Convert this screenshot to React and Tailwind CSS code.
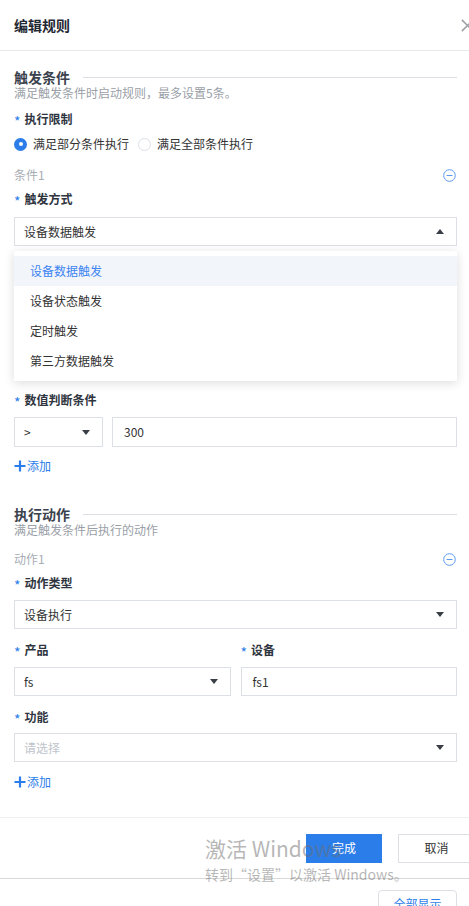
import React from "react";

const font = { fontFamily: '"Noto Sans CJK SC", "Noto Sans", sans-serif' };

// small filled triangle used by the selects
const Caret = ({ up = false }) => (
    <svg width="8" height="5" viewBox="0 0 8 5" className="shrink-0">
        {up ? <path d="M4 0 L8 5 L0 5 Z" fill="#3a3f47" /> : <path d="M0 0 L8 0 L4 5 Z" fill="#3a3f47" />}
    </svg>
);

const Label = ({ children }) => (
    <div className="h-[20px] flex items-center text-[12px] font-bold text-[#2f3540]">
        <span className="text-[#2b7de9] text-[14px] mr-[4px] font-normal leading-none pt-[4px]">*</span>
        {children}
    </div>
);

const Select = ({ value, placeholder, up = false, className = "" }) => (
    <div className={`h-[29px] border border-[#dcdfe6] bg-white flex items-center justify-between pl-[9px] pr-[12px] text-[12px] ${className}`}>
        <span className={value ? "text-[#333]" : "text-[#c0c4cc]"}>{value || placeholder}</span>
        <Caret up={up} />
    </div>
);

const Input = ({ value, className = "" }) => (
    <div className={`h-[29px] border border-[#dcdfe6] bg-white flex items-center px-[11px] text-[12px] text-[#333] ${className}`}>
        {value}
    </div>
);

const SectionTitle = ({ title, desc }) => (
    <>
        <div className="h-[18px] flex items-center gap-[13px]">
            <span className="text-[14px] leading-[18px] font-bold text-[#3b424d]">{title}</span>
            <div className="flex-1 h-px bg-[#dcdfe6]" />
        </div>
        <div className="h-[14px] flex items-center text-[12px] leading-[14px] text-[#9aa0a8]">{desc}</div>
    </>
);

const SubHead = ({ text }) => (
    <div className="h-[20px] flex items-center justify-between text-[12px] text-[#a8adb4]">
        <span>{text}</span>
        <svg width="13" height="13" viewBox="0 0 13 13" className="mr-[1px]">
            <circle cx="6.5" cy="6.5" r="5.8" fill="none" stroke="#5b9bf5" strokeWidth="1" />
            <line x1="3.5" y1="6.5" x2="9.5" y2="6.5" stroke="#5b9bf5" strokeWidth="1" />
        </svg>
    </div>
);

const AddLink = ({ className = "" }) => (
    <div className={`h-[20px] flex items-center text-[12px] text-[#2b7de9] ${className}`}>
        <svg width="12" height="12" viewBox="0 0 12 12" className="mr-[1px]">
            <path d="M6 0.5 V11.5 M0.5 6 H11.5" stroke="#2b7de9" strokeWidth="2.2" />
        </svg>
        添加
    </div>
);

const triggerOptions = ["设备数据触发", "设备状态触发", "定时触发", "第三方数据触发"];

export default function App() {
    return (
        <div className="w-[469px] h-[906px] overflow-hidden relative bg-white" style={font}>
            {/* Header */}
            <div className="h-[51px] border-b border-[#e6e8eb] flex items-center justify-between pl-[14px]">
                <span className="text-[14px] font-bold text-[#1f2833]">编辑规则</span>
                <svg width="15" height="15" viewBox="0 0 16 16" className="mr-[-6px]">
                    <path d="M2 2 L14 14 M14 2 L2 14" stroke="#9a9ea4" strokeWidth="1.6" />
                </svg>
            </div>

            {/* Body */}
            <div className="h-[766px] px-[14px]">
                <div className="w-[443px] pt-[17px]">
                    <SectionTitle title="触发条件" desc="满足触发条件时启动规则，最多设置5条。" />

                    <div className="mt-[9px]"><Label>执行限制</Label></div>
                    <div className="mt-[5px] h-[20px] flex items-center text-[12px] text-[#333]">
                        <span className="w-[13px] h-[13px] rounded-full bg-[#2b7de9] flex items-center justify-center">
                            <span className="w-[4px] h-[4px] rounded-full bg-white" />
                        </span>
                        <span className="ml-[6px]">满足部分条件执行</span>
                        <span className="ml-[9px] w-[13px] h-[13px] rounded-full border border-[#dcdfe6]" />
                        <span className="ml-[6px]">满足全部条件执行</span>
                    </div>

                    <div className="mt-[11px]"><SubHead text="条件1" /></div>
                    <div className="mt-[4px]"><Label>触发方式</Label></div>

                    <div className="relative mt-[8px]">
                        <Select value="设备数据触发" up />
                        {/* Open dropdown menu */}
                        <div className="absolute left-0 right-0 top-[34px] z-10 bg-white py-[5px] shadow-[0_2px_10px_rgba(0,0,0,0.14)]">
                            {triggerOptions.map((opt, i) => (
                                <div
                                    key={opt}
                                    className={`h-[30px] flex items-center pl-[16px] text-[12px] ${i === 0 ? "bg-[#f2f5fa] text-[#3d84f2]" : "text-[#333]"}`}
                                >
                                    {opt}
                                </div>
                            ))}
                        </div>
                    </div>

                    {/* space covered by the open menu */}
                    <div className="h-[144px]" />

                    <Label>数值判断条件</Label>
                    <div className="mt-[7px] flex gap-[9px]">
                        <Select value=">" className="w-[89px] h-[30px]" />
                        <Input value="300" className="flex-1 h-[30px]" />
                    </div>
                    <AddLink className="mt-[9px]" />

                    <div className="mt-[29px]">
                        <SectionTitle title="执行动作" desc="满足触发条件后执行的动作" />
                    </div>

                    <div className="mt-[12px]"><SubHead text="动作1" /></div>
                    <div className="mt-[4px]"><Label>动作类型</Label></div>
                    <div className="mt-[7px]"><Select value="设备执行" /></div>

                    <div className="mt-[11px] grid grid-cols-2 gap-[10px]">
                        <Label>产品</Label>
                        <Label>设备</Label>
                    </div>
                    <div className="mt-[7px] grid grid-cols-2 gap-[10px]">
                        <Select value="fs" />
                        <Input value="fs1" />
                    </div>

                    <div className="mt-[11px]"><Label>功能</Label></div>
                    <div className="mt-[6px]"><Select placeholder="请选择" /></div>
                    <AddLink className="mt-[10px]" />
                </div>
            </div>

            {/* Footer */}
            <div className="h-[61px] border-t border-[#eceef0] flex items-center justify-end gap-[16px] mr-[-6px]">
                <button className="w-[76px] h-[29px] bg-[#2b7de9] text-white text-[12px]">完成</button>
                <button className="w-[77px] h-[29px] border border-[#dcdfe6] bg-white text-[12px] text-[#333]">取消</button>
            </div>
            <div className="border-t border-[#d9d9d9] h-[28px] flex justify-end pr-[12px] pt-[11px]">
                <button className="w-[79px] h-[30px] rounded-[4px] border border-[#dcdfe6] text-[12px] text-[#2b7de9] flex items-start justify-center pt-[4px]">
                    全部显示
                </button>
            </div>

            {/* Windows activation watermark */}
            <div className="absolute left-[205px] top-[838px] pointer-events-none text-[rgba(110,110,110,0.5)] leading-none">
                <div className="text-[21px]">激活 Windows</div>
                <div className="text-[14px] mt-[8px]">转到“设置”以激活 Windows。</div>
            </div>
        </div>
    );
}
